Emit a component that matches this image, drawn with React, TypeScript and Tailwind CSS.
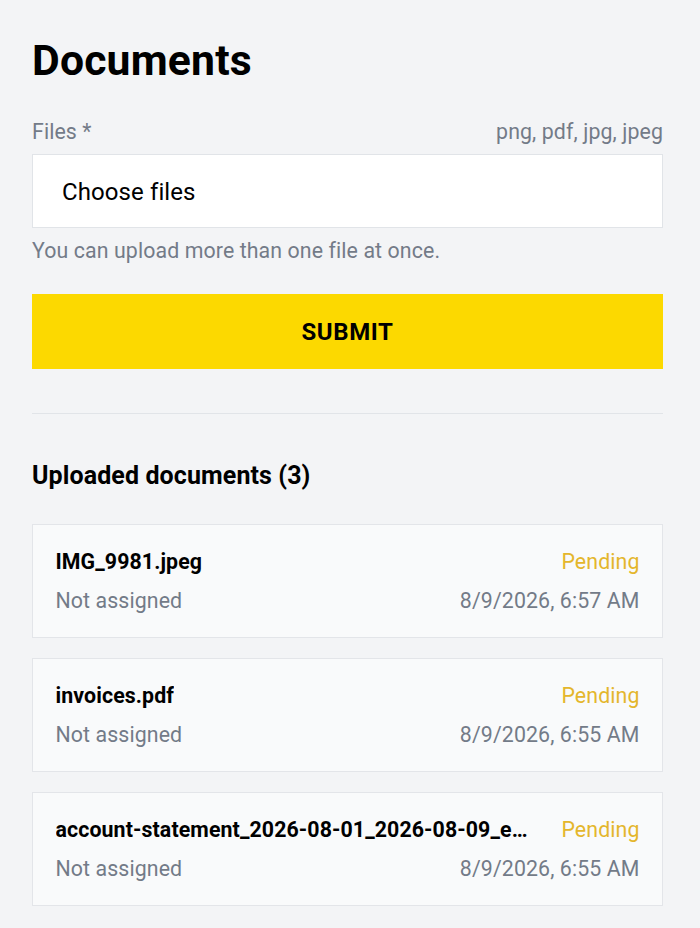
import React from 'react';

const DOCS = [
    { name: 'IMG_9981.jpeg', status: 'Pending', assignee: 'Not assigned', date: '8/9/2026, 6:57 AM' },
    { name: 'invoices.pdf', status: 'Pending', assignee: 'Not assigned', date: '8/9/2026, 6:55 AM' },
    { name: 'account-statement_2026-08-01_2026-08-09_eur.pdf', status: 'Pending', assignee: 'Not assigned', date: '8/9/2026, 6:55 AM' },
];

function DocumentCard({ doc }: { doc: (typeof DOCS)[number] }) {
    return (
        <div className="bg-[#f9fafb] border border-[#e3e5e9] px-[22.5px] pt-[22px] pb-[21px] flex flex-col gap-[9px]">
            <div className="flex justify-between items-center gap-6 leading-[30px]">
                <span className="font-bold text-black truncate min-w-0">{doc.name}</span>
                <span className="text-[#e4b62c] shrink-0">{doc.status}</span>
            </div>
            <div className="flex justify-between items-center gap-6 leading-[30px] text-[#737b88]">
                <span>{doc.assignee}</span>
                <span className="shrink-0">{doc.date}</span>
            </div>
        </div>
    );
}

export default function App() {
    return (
        <main
            className="min-h-screen bg-[#f3f4f6] pl-8 pr-[37px] pt-[36px] pb-8 text-[21.33px] tracking-[0.1px]"
            style={{ fontFamily: 'Roboto, "Noto Sans", sans-serif' }}
        >
            <h1 className="text-[42.67px] leading-[48px] font-bold text-black tracking-[0.2px]">Documents</h1>

            {/* File picker */}
            <div className="mt-[33.6px] flex justify-between leading-[28px] text-[#737b88]">
                <span>Files *</span>
                <span>png, pdf, jpg, jpeg</span>
            </div>
            <label className="mt-2 h-[74px] bg-white border border-[#e1e4e8] flex items-center pl-[29px] pt-[2px] text-[24px] text-black cursor-pointer">
                Choose files
            </label>
            <p className="mt-[9.5px] leading-[28px] text-[#737b88]">You can upload more than one file at once.</p>

            <button className="mt-[28.8px] w-full h-[75px] bg-[#fcd900] text-black font-bold text-[24px] tracking-wide uppercase pt-[2px]">
                Submit
            </button>

            <div className="mt-[44px] h-[1.5px] bg-[#e1e4e8]"></div>

            {/* Uploaded documents */}
            <h2 className="mt-[45.8px] text-[25px] leading-[32px] font-bold text-black">Uploaded documents (3)</h2>
            <div className="mt-[31.5px] flex flex-col gap-[20px]">
                {DOCS.map((doc) => (
                    <DocumentCard key={doc.name + doc.date} doc={doc} />
                ))}
            </div>
        </main>
    );
}
